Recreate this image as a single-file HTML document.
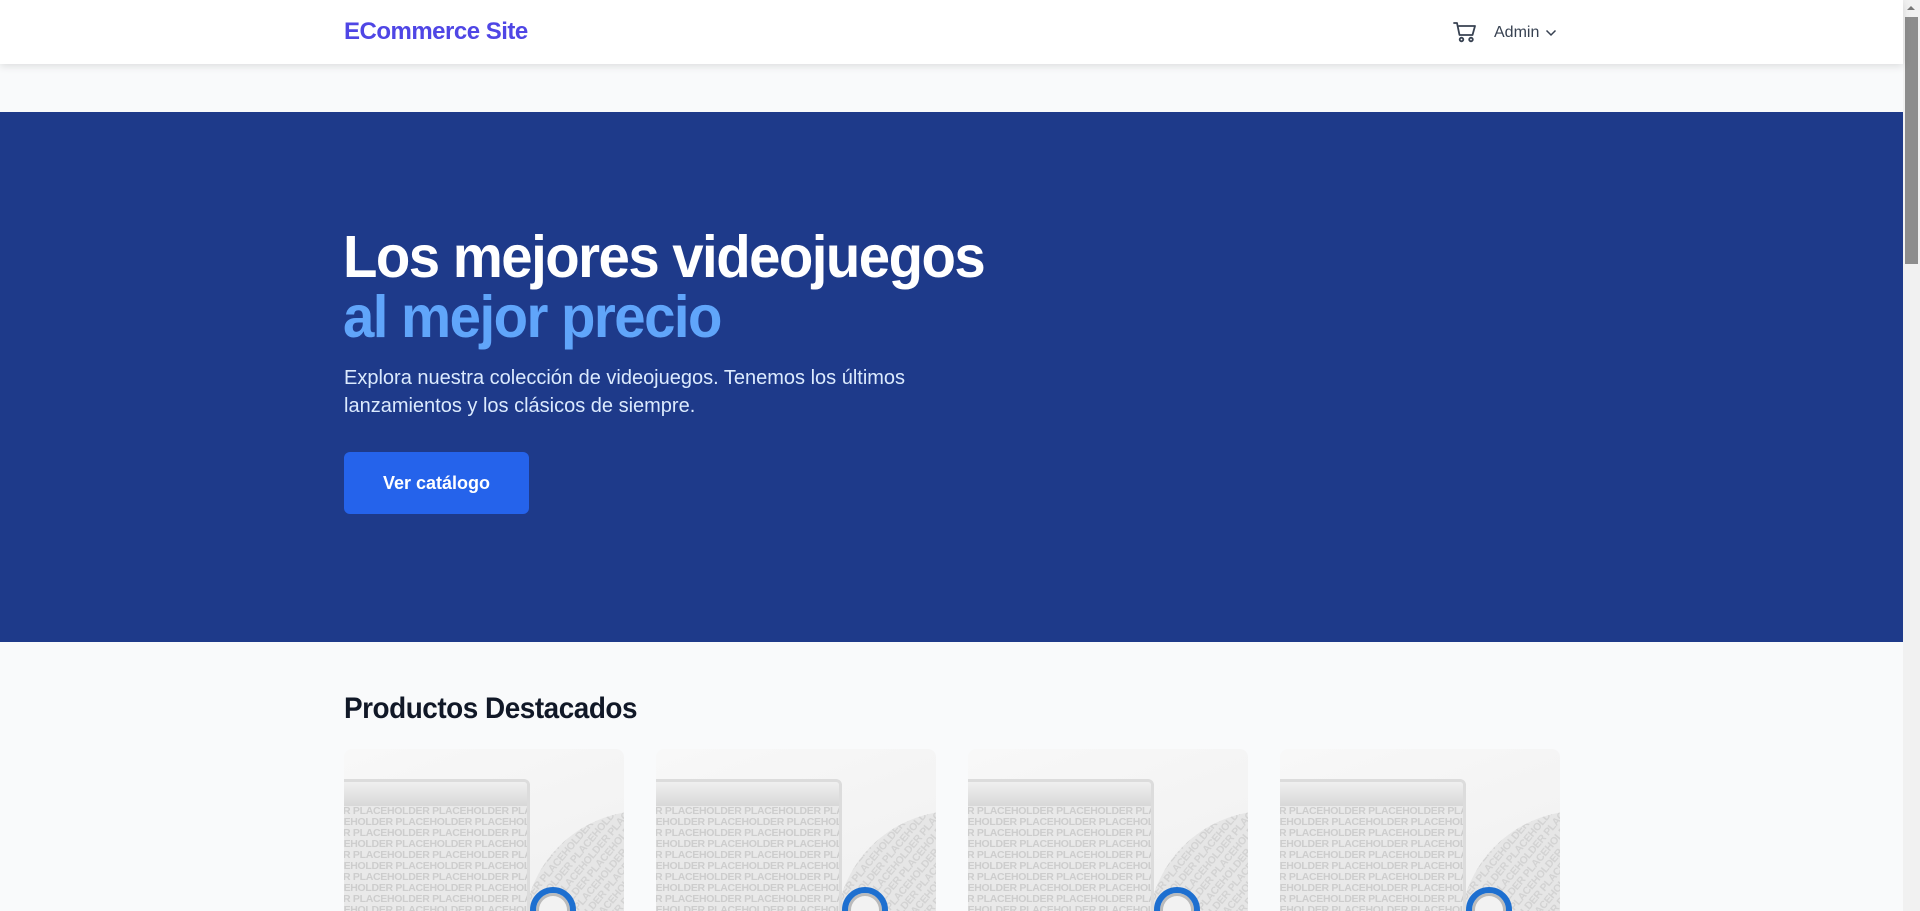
<!DOCTYPE html>
<html><head><meta charset="utf-8"><style>
*{box-sizing:border-box;margin:0;padding:0}
html,body{width:1920px;height:911px;overflow:hidden;background:#f9fafb;font-family:"Liberation Sans",sans-serif}
.hdr{position:absolute;left:0;top:0;width:1903px;height:64px;background:#fff;box-shadow:0 2px 8px rgba(0,0,0,.12);z-index:2}
.logo{position:absolute;left:344px;top:18px;font-size:24px;font-weight:600;color:#4f46e5;letter-spacing:-0.5px}
.cart{position:absolute;left:1453px;top:21px}
.admin{position:absolute;left:1494px;top:24px;font-size:16px;color:#374151}
.chev{position:absolute;left:1545px;top:29px}
.hero{position:absolute;left:0;top:112px;width:1903px;height:530px;background:#1e3a8a}
h1{position:absolute;left:343px;top:115px;font-size:59px;line-height:60px;font-weight:700;color:#fff;letter-spacing:-1.6px;white-space:nowrap;transform:scaleX(0.955);transform-origin:0 0}
h1 span{color:#60a5fa}
.p{position:absolute;left:344px;top:252px;width:580px;font-size:20px;line-height:28px;color:#dbeafe}
.btn{position:absolute;left:344px;top:340px;width:185px;height:62px;background:#2563eb;border-radius:6px;color:#fff;font-size:18px;font-weight:600;text-align:center;line-height:62px}
h2{position:absolute;left:344px;top:692px;font-size:30px;font-weight:600;color:#111827;letter-spacing:-0.5px;transform:scaleX(0.93);transform-origin:0 0}
.card{position:absolute;top:749px;width:280px;height:162px;border-radius:8px 8px 0 0;overflow:hidden;background:linear-gradient(160deg,#f8f8f8,#f0f0f0)}
.case{position:absolute;left:-10px;top:30px;width:196px;height:200px;background:#e9e9e9;border:3px solid #dcdcdc;border-radius:6px;overflow:hidden;z-index:2}
.case .bar{height:24px;background:linear-gradient(#f0f0f0,#d8d8d8)}
.pat{font-size:10.5px;line-height:11px;font-weight:700;color:#cdcdcd;white-space:nowrap;letter-spacing:-0.3px;margin-left:-8px}
.disc{position:absolute;left:180px;top:62px;width:240px;height:240px;border-radius:50%;background:#e6e6e6;overflow:hidden}
.disc .pat{transform:rotate(-50deg);transform-origin:0 0;margin-top:80px;margin-left:-40px;color:#d3d3d3}
.ring{position:absolute;left:186px;top:138px;width:46px;height:46px;border-radius:50%;border:6px solid #1d6fd0;background:#f2f2f2;z-index:3;box-shadow:inset 0 0 0 3px #bbb}
.sb{position:absolute;left:1903px;top:0;width:17px;height:911px;background:#f1f1f1}
.sb .th{position:absolute;left:2px;top:17px;width:13px;height:247px;background:#8d8d8d}
.sb .ar{position:absolute;left:4px;top:6px;width:0;height:0;border-left:4px solid transparent;border-right:4px solid transparent;border-bottom:4px solid #777}
</style></head><body>
<div class="hdr">
<div class="logo">ECommerce Site</div>
<svg class="cart" width="24" height="22" viewBox="0 0 24 22" fill="none" stroke="#374151" stroke-width="1.8" stroke-linecap="round" stroke-linejoin="round"><path d="M1 2h3l2.5 12h13l2.5-9H6"/><circle cx="8.5" cy="18.5" r="1.8"/><circle cx="18" cy="18.5" r="1.8"/></svg>
<div class="admin">Admin</div>
<svg class="chev" width="12" height="8" viewBox="0 0 12 8" fill="none" stroke="#374151" stroke-width="1.5"><path d="M1.5 1.5l4.5 4.5 4.5-4.5"/></svg>
</div>
<div class="hero">
<h1>Los mejores videojuegos<br><span>al mejor precio</span></h1>
<div class="p">Explora nuestra colección de videojuegos. Tenemos los últimos lanzamientos y los clásicos de siempre.</div>
<div class="btn">Ver catálogo</div>
</div>
<h2>Productos Destacados</h2>

<div class="card" style="left:344px"><div class="case"><div class="bar"></div><div class="pat">DER PLACEHOLDER PLACEHOLDER PLACEHOLDER PL<br>ACEHOLDER PLACEHOLDER PLACEHOLDER PLACEHOL<br>DER PLACEHOLDER PLACEHOLDER PLACEHOLDER PL<br>ACEHOLDER PLACEHOLDER PLACEHOLDER PLACEHOL<br>DER PLACEHOLDER PLACEHOLDER PLACEHOLDER PL<br>ACEHOLDER PLACEHOLDER PLACEHOLDER PLACEHOL<br>DER PLACEHOLDER PLACEHOLDER PLACEHOLDER PL<br>ACEHOLDER PLACEHOLDER PLACEHOLDER PLACEHOL<br>DER PLACEHOLDER PLACEHOLDER PLACEHOLDER PL<br>ACEHOLDER PLACEHOLDER PLACEHOLDER PLACEHOL<br>DER PLACEHOLDER PLACEHOLDER PLACEHOLDER PL<br>ACEHOLDER PLACEHOLDER PLACEHOLDER PLACEHOL<br>DER PLACEHOLDER PLACEHOLDER PLACEHOLDER PL<br>ACEHOLDER PLACEHOLDER PLACEHOLDER PLACEHOL<br>DER PLACEHOLDER PLACEHOLDER PLACEHOLDER PL<br>ACEHOLDER PLACEHOLDER PLACEHOLDER PLACEHOL</div></div><div class="disc"><div class="pat">PLACEHOLDER PLACEHOLDER PLACEHOLDER<br>HOLDER PLACEHOLDER PLACEHOLDER PLACE<br>PLACEHOLDER PLACEHOLDER PLACEHOLDER<br>HOLDER PLACEHOLDER PLACEHOLDER PLACE<br>PLACEHOLDER PLACEHOLDER PLACEHOLDER<br>HOLDER PLACEHOLDER PLACEHOLDER PLACE<br>PLACEHOLDER PLACEHOLDER PLACEHOLDER<br>HOLDER PLACEHOLDER PLACEHOLDER PLACE<br>PLACEHOLDER PLACEHOLDER PLACEHOLDER<br>HOLDER PLACEHOLDER PLACEHOLDER PLACE<br>PLACEHOLDER PLACEHOLDER PLACEHOLDER<br>HOLDER PLACEHOLDER PLACEHOLDER PLACE<br>PLACEHOLDER PLACEHOLDER PLACEHOLDER<br>HOLDER PLACEHOLDER PLACEHOLDER PLACE</div></div><div class="ring"></div></div>

<div class="card" style="left:656px"><div class="case"><div class="bar"></div><div class="pat">DER PLACEHOLDER PLACEHOLDER PLACEHOLDER PL<br>ACEHOLDER PLACEHOLDER PLACEHOLDER PLACEHOL<br>DER PLACEHOLDER PLACEHOLDER PLACEHOLDER PL<br>ACEHOLDER PLACEHOLDER PLACEHOLDER PLACEHOL<br>DER PLACEHOLDER PLACEHOLDER PLACEHOLDER PL<br>ACEHOLDER PLACEHOLDER PLACEHOLDER PLACEHOL<br>DER PLACEHOLDER PLACEHOLDER PLACEHOLDER PL<br>ACEHOLDER PLACEHOLDER PLACEHOLDER PLACEHOL<br>DER PLACEHOLDER PLACEHOLDER PLACEHOLDER PL<br>ACEHOLDER PLACEHOLDER PLACEHOLDER PLACEHOL<br>DER PLACEHOLDER PLACEHOLDER PLACEHOLDER PL<br>ACEHOLDER PLACEHOLDER PLACEHOLDER PLACEHOL<br>DER PLACEHOLDER PLACEHOLDER PLACEHOLDER PL<br>ACEHOLDER PLACEHOLDER PLACEHOLDER PLACEHOL<br>DER PLACEHOLDER PLACEHOLDER PLACEHOLDER PL<br>ACEHOLDER PLACEHOLDER PLACEHOLDER PLACEHOL</div></div><div class="disc"><div class="pat">PLACEHOLDER PLACEHOLDER PLACEHOLDER<br>HOLDER PLACEHOLDER PLACEHOLDER PLACE<br>PLACEHOLDER PLACEHOLDER PLACEHOLDER<br>HOLDER PLACEHOLDER PLACEHOLDER PLACE<br>PLACEHOLDER PLACEHOLDER PLACEHOLDER<br>HOLDER PLACEHOLDER PLACEHOLDER PLACE<br>PLACEHOLDER PLACEHOLDER PLACEHOLDER<br>HOLDER PLACEHOLDER PLACEHOLDER PLACE<br>PLACEHOLDER PLACEHOLDER PLACEHOLDER<br>HOLDER PLACEHOLDER PLACEHOLDER PLACE<br>PLACEHOLDER PLACEHOLDER PLACEHOLDER<br>HOLDER PLACEHOLDER PLACEHOLDER PLACE<br>PLACEHOLDER PLACEHOLDER PLACEHOLDER<br>HOLDER PLACEHOLDER PLACEHOLDER PLACE</div></div><div class="ring"></div></div>

<div class="card" style="left:968px"><div class="case"><div class="bar"></div><div class="pat">DER PLACEHOLDER PLACEHOLDER PLACEHOLDER PL<br>ACEHOLDER PLACEHOLDER PLACEHOLDER PLACEHOL<br>DER PLACEHOLDER PLACEHOLDER PLACEHOLDER PL<br>ACEHOLDER PLACEHOLDER PLACEHOLDER PLACEHOL<br>DER PLACEHOLDER PLACEHOLDER PLACEHOLDER PL<br>ACEHOLDER PLACEHOLDER PLACEHOLDER PLACEHOL<br>DER PLACEHOLDER PLACEHOLDER PLACEHOLDER PL<br>ACEHOLDER PLACEHOLDER PLACEHOLDER PLACEHOL<br>DER PLACEHOLDER PLACEHOLDER PLACEHOLDER PL<br>ACEHOLDER PLACEHOLDER PLACEHOLDER PLACEHOL<br>DER PLACEHOLDER PLACEHOLDER PLACEHOLDER PL<br>ACEHOLDER PLACEHOLDER PLACEHOLDER PLACEHOL<br>DER PLACEHOLDER PLACEHOLDER PLACEHOLDER PL<br>ACEHOLDER PLACEHOLDER PLACEHOLDER PLACEHOL<br>DER PLACEHOLDER PLACEHOLDER PLACEHOLDER PL<br>ACEHOLDER PLACEHOLDER PLACEHOLDER PLACEHOL</div></div><div class="disc"><div class="pat">PLACEHOLDER PLACEHOLDER PLACEHOLDER<br>HOLDER PLACEHOLDER PLACEHOLDER PLACE<br>PLACEHOLDER PLACEHOLDER PLACEHOLDER<br>HOLDER PLACEHOLDER PLACEHOLDER PLACE<br>PLACEHOLDER PLACEHOLDER PLACEHOLDER<br>HOLDER PLACEHOLDER PLACEHOLDER PLACE<br>PLACEHOLDER PLACEHOLDER PLACEHOLDER<br>HOLDER PLACEHOLDER PLACEHOLDER PLACE<br>PLACEHOLDER PLACEHOLDER PLACEHOLDER<br>HOLDER PLACEHOLDER PLACEHOLDER PLACE<br>PLACEHOLDER PLACEHOLDER PLACEHOLDER<br>HOLDER PLACEHOLDER PLACEHOLDER PLACE<br>PLACEHOLDER PLACEHOLDER PLACEHOLDER<br>HOLDER PLACEHOLDER PLACEHOLDER PLACE</div></div><div class="ring"></div></div>

<div class="card" style="left:1280px"><div class="case"><div class="bar"></div><div class="pat">DER PLACEHOLDER PLACEHOLDER PLACEHOLDER PL<br>ACEHOLDER PLACEHOLDER PLACEHOLDER PLACEHOL<br>DER PLACEHOLDER PLACEHOLDER PLACEHOLDER PL<br>ACEHOLDER PLACEHOLDER PLACEHOLDER PLACEHOL<br>DER PLACEHOLDER PLACEHOLDER PLACEHOLDER PL<br>ACEHOLDER PLACEHOLDER PLACEHOLDER PLACEHOL<br>DER PLACEHOLDER PLACEHOLDER PLACEHOLDER PL<br>ACEHOLDER PLACEHOLDER PLACEHOLDER PLACEHOL<br>DER PLACEHOLDER PLACEHOLDER PLACEHOLDER PL<br>ACEHOLDER PLACEHOLDER PLACEHOLDER PLACEHOL<br>DER PLACEHOLDER PLACEHOLDER PLACEHOLDER PL<br>ACEHOLDER PLACEHOLDER PLACEHOLDER PLACEHOL<br>DER PLACEHOLDER PLACEHOLDER PLACEHOLDER PL<br>ACEHOLDER PLACEHOLDER PLACEHOLDER PLACEHOL<br>DER PLACEHOLDER PLACEHOLDER PLACEHOLDER PL<br>ACEHOLDER PLACEHOLDER PLACEHOLDER PLACEHOL</div></div><div class="disc"><div class="pat">PLACEHOLDER PLACEHOLDER PLACEHOLDER<br>HOLDER PLACEHOLDER PLACEHOLDER PLACE<br>PLACEHOLDER PLACEHOLDER PLACEHOLDER<br>HOLDER PLACEHOLDER PLACEHOLDER PLACE<br>PLACEHOLDER PLACEHOLDER PLACEHOLDER<br>HOLDER PLACEHOLDER PLACEHOLDER PLACE<br>PLACEHOLDER PLACEHOLDER PLACEHOLDER<br>HOLDER PLACEHOLDER PLACEHOLDER PLACE<br>PLACEHOLDER PLACEHOLDER PLACEHOLDER<br>HOLDER PLACEHOLDER PLACEHOLDER PLACE<br>PLACEHOLDER PLACEHOLDER PLACEHOLDER<br>HOLDER PLACEHOLDER PLACEHOLDER PLACE<br>PLACEHOLDER PLACEHOLDER PLACEHOLDER<br>HOLDER PLACEHOLDER PLACEHOLDER PLACE</div></div><div class="ring"></div></div>

<div class="sb"><div class="ar"></div><div class="th"></div></div>
</body></html>
